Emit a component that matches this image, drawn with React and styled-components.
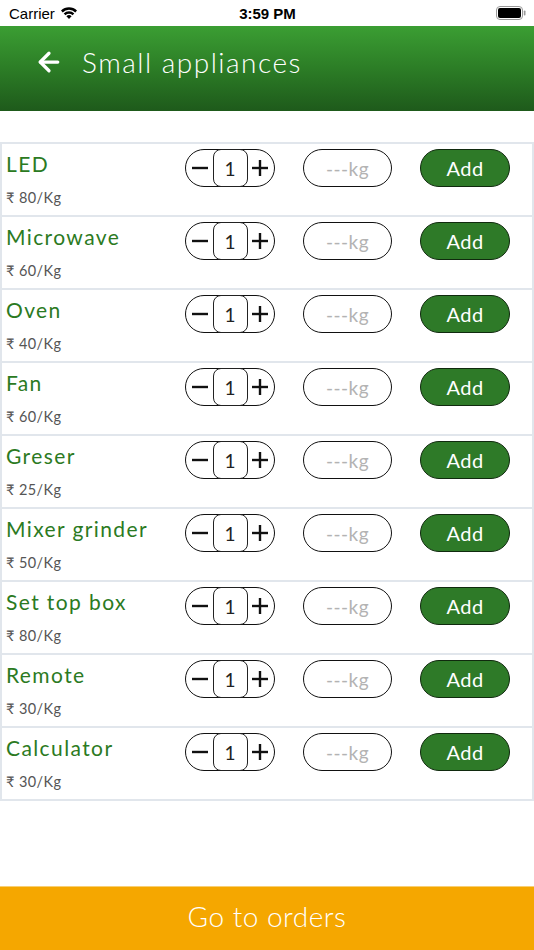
import React from "react";
import styled, { createGlobalStyle } from "styled-components";
import { ArrowLeft } from "lucide-react";

const GlobalStyle = createGlobalStyle`
  html, body {
    margin: 0;
    padding: 0;
    background: #ffffff;
  }
  body {
    font-family: "Lato", "Liberation Sans", sans-serif;
  }
  * { box-sizing: border-box; }
`;

const items = [
  { name: "LED", price: 80 },
  { name: "Microwave", price: 60 },
  { name: "Oven", price: 40 },
  { name: "Fan", price: 60 },
  { name: "Greser", price: 25 },
  { name: "Mixer grinder", price: 50 },
  { name: "Set top box", price: 80 },
  { name: "Remote", price: 30 },
  { name: "Calculator", price: 30 },
];

const Page = styled.div`
  width: 534px;
  height: 950px;
  display: flex;
  flex-direction: column;
  background: #fff;
  overflow: hidden;
`;

const StatusBar = styled.div`
  height: 26px;
  display: grid;
  grid-template-columns: 1fr auto 1fr;
  align-items: center;
  padding: 0 8px 0 9px;
  font-family: "Liberation Sans", "Roboto", sans-serif;
  font-size: 15px;
  color: #000;
`;

const Carrier = styled.div`
  display: flex;
  align-items: center;
  gap: 5px;
`;

const Clock = styled.div`
  font-weight: 700;
  font-size: 15px;
`;

const Battery = styled.div`
  justify-self: end;
  display: flex;
  align-items: center;
`;

const Header = styled.div`
  height: 85px;
  display: flex;
  align-items: center;
  gap: 18px;
  padding-left: 34px;
  padding-bottom: 14px;
  background: linear-gradient(180deg, #3b9e33 0%, #2c7d26 50%, #1e5a1b 100%);
  color: #fff;
`;

const Title = styled.h1`
  margin: 0;
  font-family: "Lato", sans-serif;
  font-weight: 300;
  font-size: 28px;
  letter-spacing: 1.5px;
`;

const List = styled.div`
  margin-top: 31px;
  border-top: 2px solid #e1e6ec;
`;

const Row = styled.div`
  height: 73px;
  display: grid;
  grid-template-columns: 151px 90px 89px 90px;
  column-gap: 28px;
  align-items: start;
  padding: 5px 0 0 4px;
  border-left: 2px solid #e1e6ec;
  border-right: 2px solid #e1e6ec;
  border-bottom: 2px solid #e1e6ec;
`;

const Info = styled.div`
  display: flex;
  flex-direction: column;
`;

const Name = styled.div`
  color: #2b7a22;
  font-size: 21px;
  letter-spacing: 1.4px;
  line-height: 28px;
  margin-top: 1px;
  white-space: nowrap;
`;

const Price = styled.div`
  color: #555;
  font-size: 14.5px;
  letter-spacing: 0.4px;
  margin-top: 11px;
`;

const Stepper = styled.div`
  height: 38px;
  border: 1.5px solid #111;
  border-radius: 19px;
  display: flex;
  align-items: stretch;
  justify-content: space-between;
  padding: 0 3px;
`;

const StepBtn = styled.div`
  width: 22px;
  display: flex;
  align-items: center;
  justify-content: center;
`;

const Count = styled.div`
  width: 35px;
  border: 1.2px solid #222;
  border-radius: 8px;
  display: flex;
  align-items: center;
  justify-content: center;
  font-size: 19px;
  color: #222;
  margin: -1px 0;
`;

const KgInput = styled.div`
  height: 38px;
  border: 1.5px solid #111;
  border-radius: 19px;
  display: flex;
  align-items: center;
  justify-content: center;
  color: #b3b3b3;
  font-size: 19px;
  letter-spacing: 0.5px;
`;

const AddButton = styled.button`
  height: 38px;
  border: 1.5px solid #102a0e;
  border-radius: 19px;
  background: #2e7a28;
  color: #fff;
  font-family: "Lato", sans-serif;
  font-size: 20px;
  letter-spacing: 0.5px;
  padding: 0;
  cursor: pointer;
`;

const Spacer = styled.div`
  flex: 1;
`;

const Footer = styled.button`
  height: 64px;
  border: none;
  border-top: 1px solid #f8cf74;
  background: #f5a700;
  color: #fff;
  font-family: "Lato", sans-serif;
  font-weight: 300;
  font-size: 28px;
  letter-spacing: 0.5px;
  padding: 0 0 6px;
`;

const Minus = () => (
  <svg width="18" height="18" viewBox="0 0 18 18">
    <line x1="1" y1="9" x2="17" y2="9" stroke="#111" strokeWidth="2.4" />
  </svg>
);

const Plus = () => (
  <svg width="18" height="18" viewBox="0 0 18 18">
    <line x1="1" y1="9" x2="17" y2="9" stroke="#111" strokeWidth="2.4" />
    <line x1="9" y1="1" x2="9" y2="17" stroke="#111" strokeWidth="2.4" />
  </svg>
);

const Wifi = () => (
  <svg width="18" height="14" viewBox="0 0 18 14">
    <path d="M1 4.6 A11.5 11.5 0 0 1 17 4.6 L15.3 6.4 A9 9 0 0 0 2.7 6.4 Z" fill="#000" />
    <path d="M3.7 7.4 A7.6 7.6 0 0 1 14.3 7.4 L12.5 9.2 A5 5 0 0 0 5.5 9.2 Z" fill="#000" />
    <path d="M6.4 10.2 A3.8 3.8 0 0 1 11.6 10.2 L9 13 Z" fill="#000" />
  </svg>
);

const BatteryIcon = () => (
  <svg width="30" height="14" viewBox="0 0 30 14">
    <rect x="0.5" y="0.5" width="26" height="13" rx="3.5" fill="none" stroke="#999" strokeWidth="1" />
    <rect x="2" y="2" width="23" height="10" rx="2" fill="#000" />
    <rect x="27.8" y="4.5" width="1.7" height="5" rx="0.8" fill="#999" />
  </svg>
);

export default function App() {
  return (
    <>
      <GlobalStyle />
      <Page>
        <StatusBar>
          <Carrier>
            Carrier <Wifi />
          </Carrier>
          <Clock>3:59 PM</Clock>
          <Battery>
            <BatteryIcon />
          </Battery>
        </StatusBar>
        <Header>
          <ArrowLeft size={30} strokeWidth={2.6} color="#fff" />
          <Title>Small appliances</Title>
        </Header>
        <List>
          {items.map((it) => (
            <Row key={it.name}>
              <Info>
                <Name>{it.name}</Name>
                <Price>₹ {it.price}/Kg</Price>
              </Info>
              <Stepper>
                <StepBtn>
                  <Minus />
                </StepBtn>
                <Count>1</Count>
                <StepBtn>
                  <Plus />
                </StepBtn>
              </Stepper>
              <KgInput>---kg</KgInput>
              <AddButton>Add</AddButton>
            </Row>
          ))}
        </List>
        <Spacer />
        <Footer>Go to orders</Footer>
      </Page>
    </>
  );
}
